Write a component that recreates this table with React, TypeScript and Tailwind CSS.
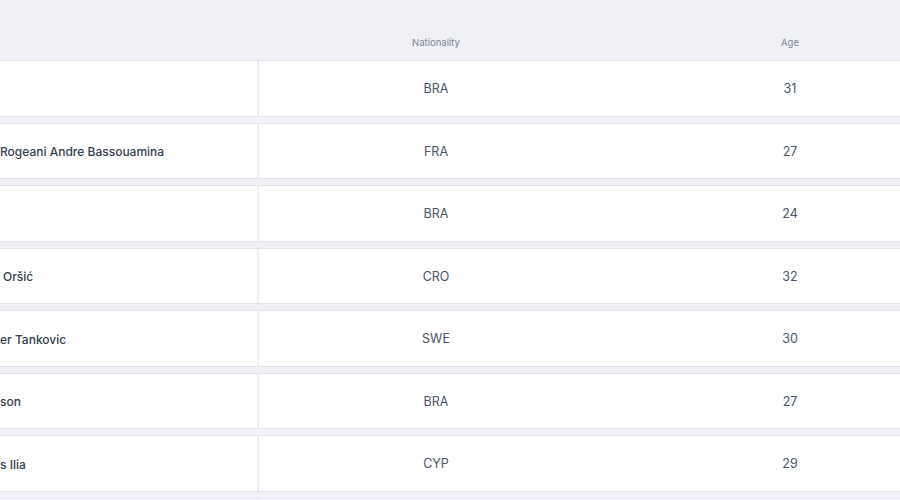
import React from "react";

const rows = [
  { name: "", pad: 0, nat: "BRA", age: "31" },
  { name: "Rogeani Andre Bassouamina", pad: 0, nat: "FRA", age: "27" },
  { name: "", pad: 0, nat: "BRA", age: "24" },
  { name: "Oršić", pad: 3, nat: "CRO", age: "32" },
  { name: "er Tankovic", pad: 0, nat: "SWE", age: "30" },
  { name: "son", pad: 0, nat: "BRA", age: "27" },
  { name: "s Ilia", pad: 0, nat: "CYP", age: "29" },
  { name: "", pad: 0, nat: "", age: "" },
];

export default function App() {
  return (
    <div
      className="w-[900px] h-[500px] overflow-hidden bg-[#f0f1f6]"
      style={{ fontFamily: "Inter, 'Noto Sans', sans-serif" }}
    >
      <div className="w-[1000px]">
        <div className="flex h-[60px] text-[9.5px] text-[#7b8494]">
          <div className="w-[259px] shrink-0" />
          <div className="w-[354px] shrink-0 pt-[36px] text-center">Nationality</div>
          <div className="w-[354px] shrink-0 pt-[36px] text-center">Age</div>
        </div>
        <div className="flex flex-col gap-[6px]">
          {rows.map((r, i) => (
            <div
              key={i}
              className="flex h-[56.5px] shrink-0 border-y border-[#e3e5ee] bg-white"
            >
              <div className="w-[259px] shrink-0 flex items-center pt-[3px] border-r-2 border-[#eceef4] text-[12px] font-medium text-[#354052]">
                <span style={{ paddingLeft: r.pad }} className="whitespace-nowrap">
                  {r.name}
                </span>
              </div>
              <div className="w-[354px] shrink-0 flex items-center justify-center pt-[3px] text-[12.5px] text-[#4a5566]">
                {r.nat}
              </div>
              <div className="w-[354px] shrink-0 flex items-center justify-center pt-[3px] text-[12.5px] text-[#4a5566]">
                {r.age}
              </div>
            </div>
          ))}
        </div>
      </div>
    </div>
  );
}
